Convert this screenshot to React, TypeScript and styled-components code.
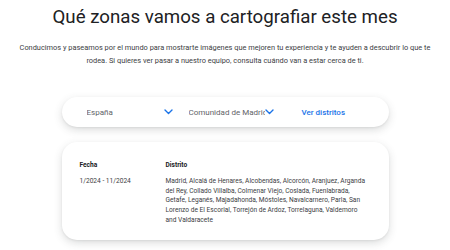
import React from 'react';
import styled, { createGlobalStyle } from 'styled-components';

const GlobalStyle = createGlobalStyle`
  html, body {
    margin: 0;
    padding: 0;
    background: #fff;
  }
  body {
    font-family: Roboto, 'Liberation Sans', sans-serif;
    color: #202124;
  }
`;

const Page = styled.div`
  width: 450px;
  height: 250px;
  overflow: hidden;
  display: flex;
  flex-direction: column;
  align-items: center;
`;

const Title = styled.h1`
  margin: 5px 0 0;
  font-size: 18.7px;
  line-height: 24px;
  font-weight: 400;
  color: #202124;
  text-align: center;
`;

const Intro = styled.p`
  margin: 12px 0 0;
  width: 420px;
  font-size: 7.4px;
  line-height: 13px;
  color: #3c4043;
  text-align: center;
`;

const Card = styled.div`
  width: 327px;
  box-sizing: border-box;
  background: #fff;
  border-radius: 15px;
  box-shadow: 0 3px 8px rgba(60, 64, 67, 0.18), 0 1px 2px rgba(60, 64, 67, 0.08);
`;

const FilterBar = styled(Card)`
  margin-top: 30px;
  height: 30px;
  padding-left: 25px;
  display: flex;
  align-items: center;
`;

const Select = styled.div<{ $width: number; $gap?: number }>`
  width: ${p => p.$width}px;
  margin-right: ${p => p.$gap ?? 0}px;
  display: flex;
  align-items: center;
  justify-content: space-between;
  font-size: 8px;
  color: #5f6368;
`;

const SelectText = styled.span<{ $clip?: number }>`
  display: block;
  white-space: nowrap;
  overflow: hidden;
  max-width: ${p => (p.$clip ? `${p.$clip}px` : 'none')};
`;

const LinkText = styled.a`
  font-size: 8px;
  font-weight: 500;
  color: #1a73e8;
  text-decoration: none;
`;

const TableCard = styled(Card)`
  margin-top: 15px;
  height: 98px;
  padding: 19px 18px 0;
`;

const Grid = styled.div`
  display: grid;
  grid-template-columns: 86px 1fr;
  row-gap: 6px;
  font-size: 6.6px;
  line-height: 9.8px;
`;

const Head = styled.div`
  font-weight: 700;
  color: #202124;
`;

const Cell = styled.div`
  color: #3c4043;
  width: 200px;
`;

const Chevron = () => (
  <svg width="9" height="6" viewBox="0 0 9 6" fill="none">
    <path d="M1 1l3.5 3.5L8 1" stroke="#1a73e8" strokeWidth="1.4" strokeLinecap="round" strokeLinejoin="round" />
  </svg>
);

export default function App() {
  return (
    <Page>
      <GlobalStyle />
      <Title>Qué zonas vamos a cartografiar este mes</Title>
      <Intro>
        Conducimos y paseamos por el mundo para mostrarte imágenes que mejoren tu experiencia y te ayuden a descubrir lo que te rodea. Si quieres ver pasar a nuestro equipo, consulta cuándo van a estar cerca de ti.
      </Intro>
      <FilterBar>
        <Select $width={86} $gap={16}>
          <SelectText>España</SelectText>
          <Chevron />
        </Select>
        <Select $width={85} $gap={28}>
          <SelectText $clip={76}>Comunidad de Madrid</SelectText>
          <Chevron />
        </Select>
        <LinkText href="#">Ver distritos</LinkText>
      </FilterBar>
      <TableCard>
        <Grid>
          <Head>Fecha</Head>
          <Head>Distrito</Head>
          <Cell>1/2024 - 11/2024</Cell>
          <Cell>
            Madrid, Alcalá de Henares, Alcobendas, Alcorcón, Aranjuez, Arganda del Rey, Collado Villalba, Colmenar Viejo, Coslada, Fuenlabrada, Getafe, Leganés, Majadahonda, Móstoles, Navalcarnero, Parla, San Lorenzo de El Escorial, Torrejón de Ardoz, Torrelaguna, Valdemoro and Valdaracete
          </Cell>
        </Grid>
      </TableCard>
    </Page>
  );
}
